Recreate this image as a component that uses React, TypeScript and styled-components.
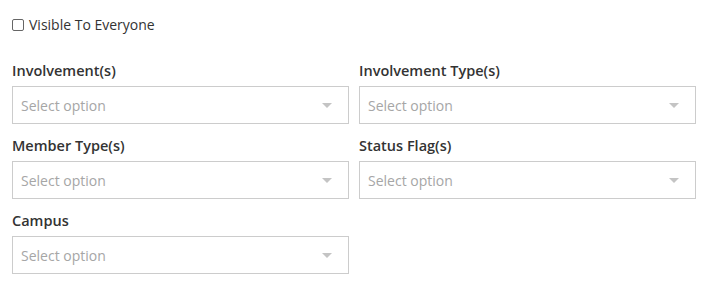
import React from 'react';
import styled, { createGlobalStyle } from 'styled-components';

const GlobalStyle = createGlobalStyle`
  body {
    margin: 0;
    background: #fff;
    font-family: 'Open Sans', 'Liberation Sans', sans-serif;
    color: #333;
  }
`;

const Page = styled.div`
  padding: 15px 10px 0 12px;
  width: 684px;
`;

const CheckRow = styled.label`
  display: flex;
  align-items: center;
  gap: 5px;
  font-size: 14px;
  line-height: 20px;
  color: #333;
`;

const Box = styled.span`
  width: 12px;
  height: 12px;
  border: 1px solid #666;
  border-radius: 2px;
  box-sizing: border-box;
`;

const Grid = styled.div`
  display: grid;
  grid-template-columns: 1fr 1fr;
  column-gap: 10px;
  row-gap: 12px;
  margin-top: 26px;
`;

const Field = styled.div`
  display: flex;
  flex-direction: column;
`;

const Label = styled.div`
  font-size: 14.5px;
  font-weight: 600;
  line-height: 20px;
  margin-bottom: 5px;
  color: #333;
`;

const Select = styled.div`
  display: flex;
  align-items: center;
  justify-content: space-between;
  height: 38px;
  box-sizing: border-box;
  border: 1px solid #ccc;
  padding: 1px 16px 0 8px;
  font-size: 14px;
  color: #a6a6a6;
`;

const Caret = styled.span`
  width: 0;
  height: 0;
  border-left: 5px solid transparent;
  border-right: 5px solid transparent;
  border-top: 5px solid #c4c4c4;
`;

const FIELDS = ['Involvement(s)', 'Involvement Type(s)', 'Member Type(s)', 'Status Flag(s)', 'Campus'];

export default function App() {
  return (
    <Page>
      <GlobalStyle />
      <CheckRow>
        <Box />
        Visible To Everyone
      </CheckRow>
      <Grid>
        {FIELDS.map((f) => (
          <Field key={f}>
            <Label>{f}</Label>
            <Select>
              Select option
              <Caret />
            </Select>
          </Field>
        ))}
      </Grid>
    </Page>
  );
}
